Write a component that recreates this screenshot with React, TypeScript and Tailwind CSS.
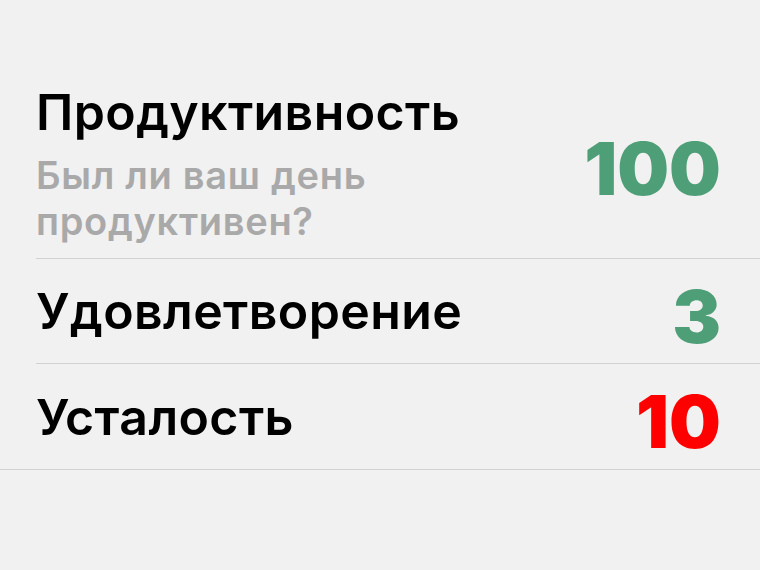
import React from "react";

type Metric = {
  title: string;
  subtitle?: string;
  value: number;
  color: string;
};

const metrics: Metric[] = [
  { title: "Продуктивность", subtitle: "Был ли ваш день продуктивен?", value: 100, color: "text-[#4e9e77]" },
  { title: "Удовлетворение", value: 3, color: "text-[#4e9e77]" },
  { title: "Усталость", value: 10, color: "text-[#ff0000]" },
];

export default function App() {
  return (
    <div className="min-h-[570px] bg-[#f1f1f1] pt-[82px] font-['Inter',sans-serif]">
      <div className="border-b border-[#d2d2d2]">
        {metrics.map((m, i) => (
          <div key={m.title} className="pl-9">
            <div
              className={`flex items-center justify-between pr-[39px] ${
                i < metrics.length - 1 ? "border-b border-[#d2d2d2]" : ""
              } ${m.subtitle ? "pb-[14px]" : "h-[105px]"}`}
            >
              <div>
                <div className="text-[50px] font-semibold leading-[60px] tracking-[0.4px] text-black">
                  {m.title}
                </div>
                {m.subtitle && (
                  <div className="mt-[10px] w-[360px] text-[38px] font-semibold leading-[46px] tracking-[0.7px] text-[#a9a9a9]">
                    {m.subtitle}
                  </div>
                )}
              </div>
              <div className={`pt-[10px] text-[73px] font-black leading-none ${m.color}`}>
                {m.value}
              </div>
            </div>
          </div>
        ))}
      </div>
    </div>
  );
}
